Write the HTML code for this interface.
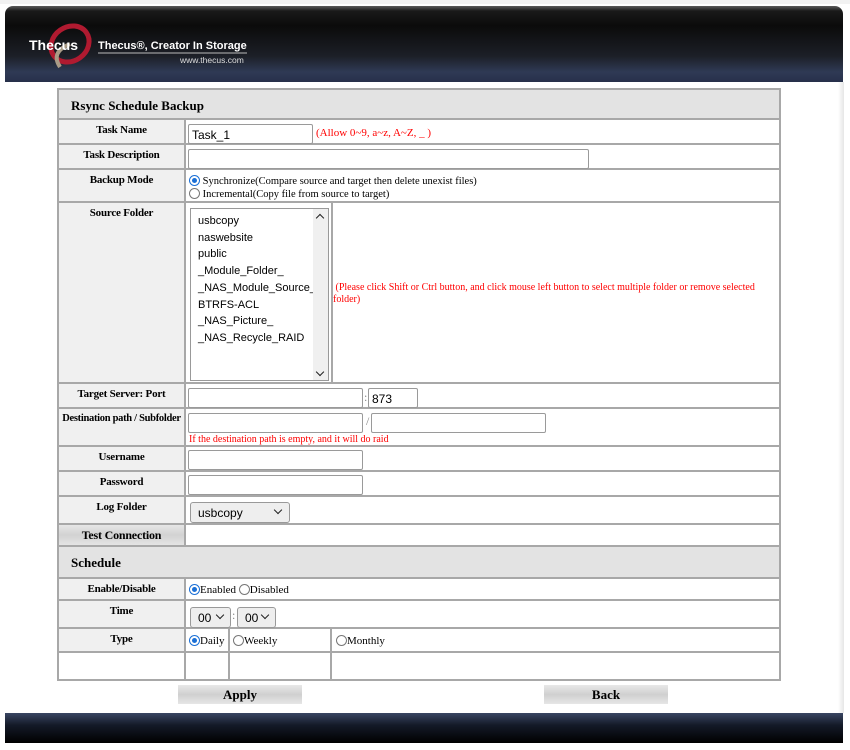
<!DOCTYPE html>
<html><head><meta charset="utf-8"><style>
*{box-sizing:border-box;margin:0;padding:0}
body{width:850px;height:750px;background:#fff;position:relative;overflow:hidden;font-family:"Liberation Serif",serif;font-size:12px}
.a{position:absolute}
.hdr{left:5px;top:6px;width:838px;height:76px;border-radius:8px 8px 0 0;background:linear-gradient(#5a5a5a 0,#1a1a1a 5px,#0b0b0b 20px,#1c1f27 50px,#2f3a55 66px,#27304a 76px)}
.ftr{left:5px;top:713px;width:838px;height:30px;background:linear-gradient(#3a4663,#141a28 40%,#000)}
.lbl{background:#f0f0f0;font-weight:bold;text-align:center;font-size:11px;white-space:nowrap;letter-spacing:-0.2px;border-right:2px solid #a8a8a8;border-bottom:2px solid #a8a8a8;padding-top:4px}
.val{background:#fff;border-bottom:2px solid #a8a8a8}
.ttl{background:#e3e3e3;font-weight:bold;font-size:13px;border-bottom:2px solid #a8a8a8;padding-left:12px}
.inp{position:absolute;height:20px;border:1px solid #9a9a9a;border-radius:2px;background:#fff;font-family:"Liberation Sans",sans-serif;font-size:12px;padding:3px 3px}
.red{color:#f00;font-size:11px}
.sel{position:absolute;height:21px;border:1px solid #999;border-radius:3px;background:#eee;font-family:"Liberation Sans",sans-serif;font-size:12px;padding:3px 7px}
.rad{display:inline-block;width:11px;height:11px;border:1px solid #777;border-radius:50%;vertical-align:-2px;background:#fff;position:relative}
.rad.on{border-color:#1a6fd6}
.rad.on:after{content:"";position:absolute;left:2px;top:2px;width:5px;height:5px;border-radius:50%;background:#1a6fd6}
.btn{position:absolute;height:19px;background:linear-gradient(#e8e8e8,#d0d0d0 50%,#e6e6e6);font-weight:bold;text-align:center;font-size:13px;padding-top:2px}
.chev{position:absolute;top:4px;width:6px;height:6px;border-right:1.5px solid #222;border-bottom:1.5px solid #222;transform:rotate(45deg)}
</style></head><body>
<div class="a" style="left:0;top:0;width:850px;height:4px;background:#f2f2f2"></div>
<div class="a" style="left:838px;top:82px;width:6px;height:631px;background:linear-gradient(90deg,#fff,#e6e6e6)"></div>
<div class="a hdr"></div>
<svg class="a" style="left:25px;top:22px" width="230" height="50">
<ellipse cx="45" cy="22" rx="20" ry="17" fill="none" stroke="#b01a30" stroke-width="5" transform="rotate(-35 45 22)"/>
<path d="M35 45 Q25 30 45 22" fill="none" stroke="#a99b86" stroke-width="4"/>
<text x="4" y="28" fill="#fff" font-family="Liberation Sans" font-weight="bold" font-size="14">Thecus</text>
<text x="73" y="27" fill="#fff" font-family="Liberation Sans" font-weight="bold" font-size="11">Thecus®, Creator In Storage</text>
<line x1="73" y1="31" x2="222" y2="31" stroke="#bbb"/>
<text x="155" y="41" fill="#ddd" font-family="Liberation Sans" font-size="8.5">www.thecus.com</text>
</svg>
<div class="ftr a"></div>

<div class="a" style="left:57px;top:88px;width:724px;height:593px;border:2px solid #a8a8a8;border-bottom:none"></div>
<div class="a ttl" style="left:59px;top:90px;width:720px;height:30px;padding-top:8px">Rsync Schedule Backup</div>

<div class="a lbl" style="left:59px;top:120px;width:127px;height:25px">Task Name</div>
<div class="a val" style="left:186px;top:120px;width:593px;height:25px"></div>
<div class="inp" style="left:188px;top:124px;width:125px">Task_1</div>
<div class="a red" style="left:316px;top:127px">(Allow 0~9, a~z, A~Z, _ )</div>

<div class="a lbl" style="left:59px;top:145px;width:127px;height:25px">Task Description</div>
<div class="a val" style="left:186px;top:145px;width:593px;height:25px"></div>
<div class="inp" style="left:188px;top:149px;width:401px"></div>

<div class="a lbl" style="left:59px;top:170px;width:127px;height:33px">Backup Mode</div>
<div class="a val" style="left:186px;top:170px;width:593px;height:33px"></div>
<div class="a" style="left:189px;top:175px;font-size:10.5px;line-height:12px"><span class="rad on"></span> Synchronize(Compare source and target then delete unexist files)<br><span class="rad"></span> Incremental(Copy file from source to target)</div>

<div class="a lbl" style="left:59px;top:203px;width:127px;height:181px">Source Folder</div>
<div class="a val" style="left:186px;top:203px;width:593px;height:181px"></div>
<div class="a" style="left:331px;top:203px;width:2px;height:180px;background:#a8a8a8"></div>
<div class="a" style="left:190px;top:208px;width:139px;height:173px;border:1px solid #999;font-family:'Liberation Sans',sans-serif;font-size:11px;line-height:16.7px;padding:4px 7px">usbcopy<br>naswebsite<br>public<br>_Module_Folder_<br>_NAS_Module_Source_<br>BTRFS-ACL<br>_NAS_Picture_<br>_NAS_Recycle_RAID
<div class="a" style="right:0;top:0;width:15px;height:171px;background:#f0f0f0"><div class="chev" style="left:4px;top:6px;transform:rotate(225deg)"></div><div class="chev" style="left:4px;top:160px"></div></div></div>
<div class="a red" style="left:333px;top:282px;font-size:10px;line-height:12px;width:440px">&nbsp;(Please click Shift or Ctrl button, and click mouse left button to select multiple folder or remove selected folder)</div>

<div class="a lbl" style="left:59px;top:384px;width:127px;height:25px">Target Server: Port</div>
<div class="a val" style="left:186px;top:384px;width:593px;height:25px"></div>
<div class="inp" style="left:188px;top:388px;width:175px"></div>
<div class="a" style="left:364px;top:390px;color:#888">:</div>
<div class="inp" style="left:368px;top:388px;width:50px">873</div>

<div class="a lbl" style="left:59px;top:409px;width:127px;height:38px;font-size:10.5px;letter-spacing:-0.3px">Destination path / Subfolder</div>
<div class="a val" style="left:186px;top:409px;width:593px;height:38px"></div>
<div class="inp" style="left:188px;top:413px;width:175px"></div>
<div class="a" style="left:366px;top:414px;color:#888">/</div>
<div class="inp" style="left:371px;top:413px;width:175px"></div>
<div class="a red" style="left:189px;top:434px;font-size:10px">If the destination path is empty, and it will do raid</div>

<div class="a lbl" style="left:59px;top:447px;width:127px;height:25px">Username</div>
<div class="a val" style="left:186px;top:447px;width:593px;height:25px"></div>
<div class="inp" style="left:188px;top:450px;width:175px"></div>

<div class="a lbl" style="left:59px;top:472px;width:127px;height:25px">Password</div>
<div class="a val" style="left:186px;top:472px;width:593px;height:25px"></div>
<div class="inp" style="left:188px;top:475px;width:175px"></div>

<div class="a lbl" style="left:59px;top:497px;width:127px;height:28px">Log Folder</div>
<div class="a val" style="left:186px;top:497px;width:593px;height:28px"></div>
<div class="sel" style="left:190px;top:502px;width:100px">usbcopy<div class="chev" style="right:8px"></div></div>

<div class="a lbl" style="left:59px;top:525px;width:127px;height:22px;font-size:12px;padding-top:3px;background:linear-gradient(#e6e6e6,#d2d2d2 50%,#e4e4e4)">Test Connection</div>
<div class="a val" style="left:186px;top:525px;width:593px;height:22px"></div>

<div class="a ttl" style="left:59px;top:547px;width:720px;height:32px;padding-top:8px">Schedule</div>

<div class="a lbl" style="left:59px;top:579px;width:127px;height:22px">Enable/Disable</div>
<div class="a val" style="left:186px;top:579px;width:593px;height:22px"></div>
<div class="a" style="left:189px;top:584px;font-size:11px"><span class="rad on"></span>Enabled <span class="rad"></span>Disabled</div>

<div class="a lbl" style="left:59px;top:601px;width:127px;height:28px">Time</div>
<div class="a val" style="left:186px;top:601px;width:593px;height:28px"></div>
<div class="sel" style="left:190px;top:607px;width:41px">00<div class="chev" style="right:7px"></div></div>
<div class="a" style="left:232px;top:608px;color:#888">:</div>
<div class="sel" style="left:237px;top:607px;width:39px">00<div class="chev" style="right:7px"></div></div>

<div class="a lbl" style="left:59px;top:629px;width:127px;height:24px">Type</div>
<div class="a val" style="left:186px;top:629px;width:593px;height:24px"></div>
<div class="a" style="left:189px;top:635px;font-size:11px"><span class="rad on"></span>Daily</div>
<div class="a" style="left:233px;top:635px;font-size:11px"><span class="rad"></span>Weekly</div>
<div class="a" style="left:336px;top:635px;font-size:11px"><span class="rad"></span>Monthly</div>

<div class="a" style="left:59px;top:653px;width:127px;height:28px;border-right:2px solid #a8a8a8;border-bottom:2px solid #a8a8a8"></div>
<div class="a" style="left:186px;top:653px;width:593px;height:28px;border-bottom:2px solid #a8a8a8"></div>
<div class="a" style="left:228px;top:629px;width:2px;height:52px;background:#a8a8a8"></div>
<div class="a" style="left:330px;top:629px;width:2px;height:52px;background:#a8a8a8"></div>

<div class="btn" style="left:178px;top:685px;width:124px">Apply</div>
<div class="btn" style="left:544px;top:685px;width:124px">Back</div>
</body></html>
